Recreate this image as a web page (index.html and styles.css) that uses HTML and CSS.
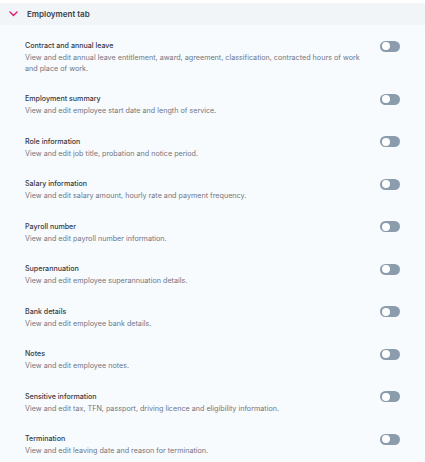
FILE: index.html
```html
<!DOCTYPE html>
<html lang="en">
<head>
    <meta charset="UTF-8">
    <meta name="viewport" content="width=device-width, initial-scale=1.0">
    <title>Employment tab</title>
    <link rel="stylesheet" href="styles.css">
</head>
<body>
    <div class="panel">
        <div class="panel-header">
            <svg class="chevron" width="9" height="6" viewBox="0 0 9 6">
                <path d="M1 1 L4.5 4.5 L8 1" fill="none" stroke="#e0186c" stroke-width="1.4" stroke-linecap="round" stroke-linejoin="round"/>
            </svg>
            <span>Employment tab</span>
        </div>

        <div class="rows">
            <div class="row">
                <div class="row-text">
                    <div class="row-title">Contract and annual leave</div>
                    <div class="row-desc">View and edit annual leave entitlement, award, agreement, classification, contracted hours of work and place of work.</div>
                </div>
                <div class="toggle"></div>
            </div>
            <div class="row">
                <div class="row-text">
                    <div class="row-title">Employment summary</div>
                    <div class="row-desc">View and edit employee start date and length of service.</div>
                </div>
                <div class="toggle"></div>
            </div>
            <div class="row">
                <div class="row-text">
                    <div class="row-title">Role information</div>
                    <div class="row-desc">View and edit job title, probation and notice period.</div>
                </div>
                <div class="toggle"></div>
            </div>
            <div class="row">
                <div class="row-text">
                    <div class="row-title">Salary information</div>
                    <div class="row-desc">View and edit salary amount, hourly rate and payment frequency.</div>
                </div>
                <div class="toggle"></div>
            </div>
            <div class="row">
                <div class="row-text">
                    <div class="row-title">Payroll number</div>
                    <div class="row-desc">View and edit payroll number information.</div>
                </div>
                <div class="toggle"></div>
            </div>
            <div class="row">
                <div class="row-text">
                    <div class="row-title">Superannuation</div>
                    <div class="row-desc">View and edit employee superannuation details.</div>
                </div>
                <div class="toggle"></div>
            </div>
            <div class="row">
                <div class="row-text">
                    <div class="row-title">Bank details</div>
                    <div class="row-desc">View and edit employee bank details.</div>
                </div>
                <div class="toggle"></div>
            </div>
            <div class="row">
                <div class="row-text">
                    <div class="row-title">Notes</div>
                    <div class="row-desc">View and edit employee notes.</div>
                </div>
                <div class="toggle"></div>
            </div>
            <div class="row">
                <div class="row-text">
                    <div class="row-title">Sensitive information</div>
                    <div class="row-desc">View and edit tax, TFN, passport, driving licence and eligibility information.</div>
                </div>
                <div class="toggle"></div>
            </div>
            <div class="row">
                <div class="row-text">
                    <div class="row-title">Termination</div>
                    <div class="row-desc">View and edit leaving date and reason for termination.</div>
                </div>
                <div class="toggle"></div>
            </div>
        </div>
    </div>
</body>
</html>
```

FILE: styles.css
```css
body {
    margin: 0;
    background-color: #ffffff;
    font-family: "Inter", "Liberation Sans", sans-serif;
}
.panel {
    margin-top: 3px;
    background-color: #f8fbfe;
    min-height: 459px;
}
.panel-header {
    display: flex;
    align-items: center;
    gap: 9px;
    height: 22px;
    padding-left: 9px;
    background-color: #f1f5f8;
    font-size: 8px;
    font-weight: 600;
    color: #3a3f4a;
}
.chevron {
    display: block;
}
.rows {
    padding-top: 5px;
}
.row {
    display: flex;
    align-items: flex-start;
    justify-content: space-between;
    gap: 8px;
    padding: 9px 25px 9px 25px;
}
.row-text {
    flex: 1;
}
.row-title {
    font-size: 7.1px;
    line-height: 14px;
    font-weight: 500;
    color: #353a45;
}
.row-desc {
    font-size: 7.2px;
    line-height: 10.5px;
    color: #70757f;
}
.toggle {
    position: relative;
    flex: none;
    width: 20px;
    height: 11px;
    margin-top: 1.5px;
    border-radius: 6px;
    background-color: #8b9cad;
}
.toggle::after {
    content: "";
    position: absolute;
    left: 1.5px;
    top: 1.5px;
    width: 8px;
    height: 8px;
    border-radius: 50%;
    background-color: #ffffff;
}
```
